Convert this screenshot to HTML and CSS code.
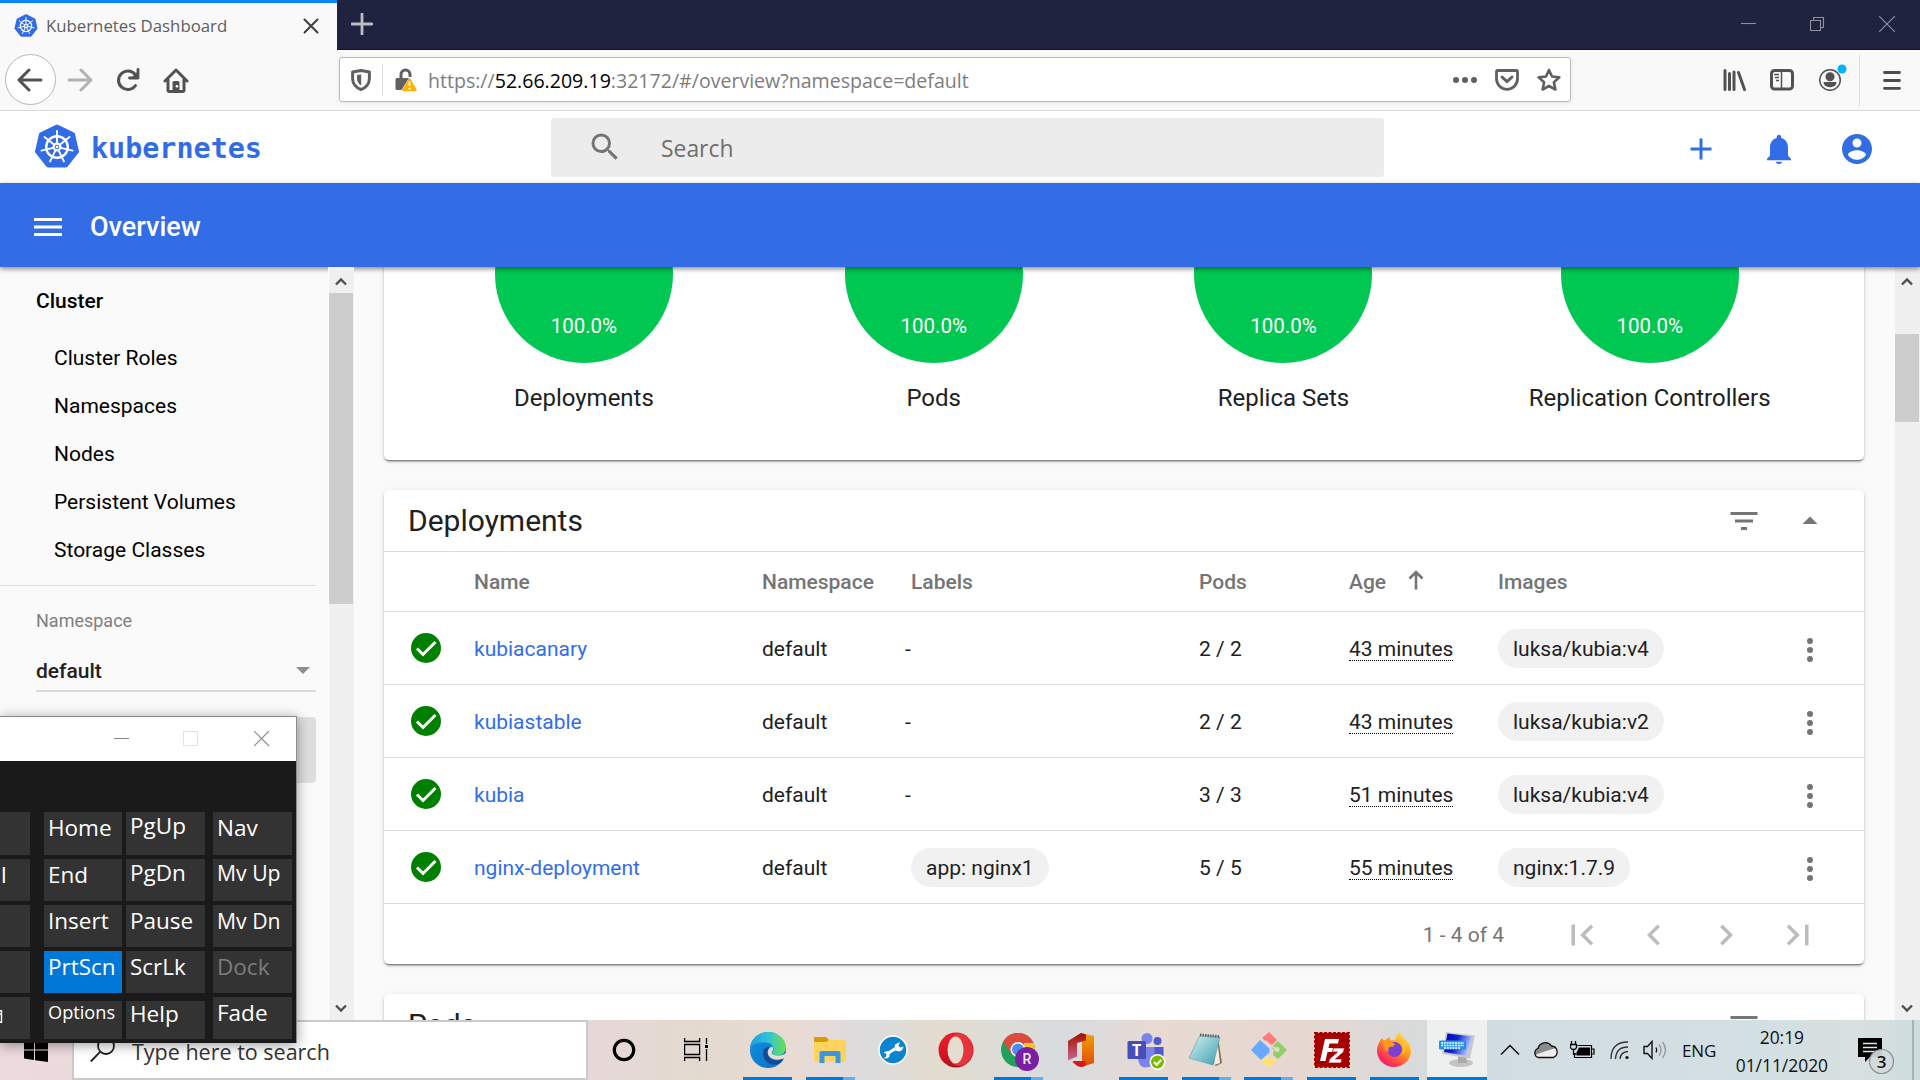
FILE: index.html
```html
<!DOCTYPE html>
<html lang="en">
<head>
<meta charset="utf-8">
<title>Kubernetes Dashboard</title>
<link rel="stylesheet" href="styles.css">
</head>
<body>
<svg class="defs" aria-hidden="true">
  <symbol id="k8s" viewBox="-23 -23 46 46">
    <path d="M0-20.5 16-12.8 20 4.5 8.9 18.6H-8.9L-20 4.5-16-12.8Z" fill="#326ce5" stroke="#326ce5" stroke-width="4" stroke-linejoin="round"/>
    <g fill="none" stroke="#fff">
      <circle r="10.8" stroke-width="2.4"/>
      <path stroke-width="1.9" stroke-linecap="round" d="M0-4V-16M3.1-2.5 12.5-10M3.9.9 15.6 3.6M1.7 3.6 6.9 14.4M-1.7 3.6-6.9 14.4M-3.9.9-15.6 3.6M-3.1-2.5-12.5-10"/>
      <circle r="3.4" stroke-width="2.2"/>
    </g>
    <circle r="1.3" fill="#fff"/>
  </symbol>
  <symbol id="check" viewBox="0 0 30 30"><circle cx="15" cy="15" r="15" fill="#008000"/><path d="M6 15.5l6 6L24.5 9" fill="none" stroke="#fff" stroke-width="3"/></symbol>
  <symbol id="more" viewBox="0 0 24 24"><circle cx="12" cy="6" r="2"/><circle cx="12" cy="12" r="2"/><circle cx="12" cy="18" r="2"/></symbol>
  <symbol id="filter" viewBox="0 0 24 24"><path d="M10 18h4v-2h-4v2zM3 6v2h18V6H3zm3 7h12v-2H6v2z"/></symbol>
  <symbol id="up" viewBox="0 0 24 24"><path d="M7 14l5-5 5 5z"/></symbol>
  <symbol id="sb-up" viewBox="0 0 12 9"><path d="M1 7.5 6 2.5l5 5" fill="none" stroke="#505050" stroke-width="2.4"/></symbol>
  <symbol id="sb-down" viewBox="0 0 12 9"><path d="M1 1.5l5 5 5-5" fill="none" stroke="#505050" stroke-width="2.4"/></symbol>
</svg>

<div class="screen">
  <header class="tabstrip">
    <div class="tab">
      <svg class="favicon"><use href="#k8s"/></svg>
      <span class="tab-title">Kubernetes Dashboard</span>
      <svg class="tab-close" viewBox="0 0 16 16"><path d="M1.5 1.5l13 13M14.500 1.500l-13 13" stroke="#3d3d3d" stroke-width="2" stroke-linecap="round"/></svg>
    </div>
    <svg class="newtab" viewBox="0 0 22 22"><path d="M11 1v20M1 11h20" stroke="#bcbcc5" stroke-width="2.800" stroke-linecap="round"/></svg>
    <div class="winctl">
      <svg width="16" height="16" viewBox="0 0 16 16"><path d="M0 7.500h15"/></svg>
      <svg width="16" height="16" viewBox="0 0 16 16"><path d="M.5 4.500h10v10H.5zM3.500 4.500v-3h10v10h-3"/></svg>
      <svg width="16" height="16" viewBox="0 0 16 16"><path d="M0 0l16 16M16 0 0 16"/></svg>
    </div>
  </header>

  <nav class="toolbar">
    <span class="back"><svg width="26" height="24" viewBox="0 0 26 24"><path d="M24 12H2M12 2 2 12l10 10"/></svg></span>
    <svg class="tool fwd" width="26" height="24" viewBox="0 0 26 24"><path d="M2 12h22M14 2l10 10-10 10"/></svg>
    <svg class="tool reload" width="24" height="24" viewBox="0 0 24 24"><path d="M19.500 17.500A9.300 9.300 0 1 1 19.500 7"/><path d="M22 1.500V10h-8.500" stroke-width="2.800"/><path d="M22 4 22 10H16z" fill="#525252" stroke-width="1"/></svg>
    <svg class="tool home" width="26" height="25" viewBox="0 0 26 25"><path d="M2 13 13 2l11 11M5 11.500V22q0 1.500 1.500 1.500h13Q21 23.500 21 22V11.500" /><path d="M9.500 23v-8.500q0-1.500 1.500-1.500h4q1.500 0 1.500 1.500V23z" fill="#525252" stroke="none"/><circle cx="14" cy="18.300" r="1.300" fill="#fff" stroke="none"/></svg>
    <div class="urlbar">
      <svg class="shield" width="20" height="22" viewBox="0 0 20 22"><path d="M10 1.600 18.400 3v6.500c0 5-3.600 9.300-8.400 11-4.800-1.700-8.400-6-8.400-11V3z" fill="none" stroke="#606060" stroke-width="3" stroke-linejoin="round"/><path d="M10.200 5.500v11C7.400 15 6 12.200 6 9.500V6z" fill="#606060"/></svg>
      <span class="url-sep"></span>
      <svg class="lock" width="22" height="24" viewBox="0 0 22 24"><path d="M6 10V6.500a4.500 4.500 0 0 1 9 0V9" fill="none" stroke="#606060" stroke-width="3"/><path d="M2 10h12l-7.500 12H2Q.5 22 .5 20.500v-9Q.5 10 2 10z" fill="#606060"/><path d="M14.500 11.500 20.500 22h-12z" fill="#ffb000" stroke="#ffb000" stroke-width="2.500" stroke-linejoin="round"/><path d="M14.500 13.500v4.300M14.500 19.700v1.800" stroke="#fff" stroke-width="2"/></svg>
      <span class="url">https://<b>52.66.209.19</b>:32172/#/overview?namespace=default</span>
      <svg class="dots" width="24" height="6" viewBox="0 0 24 6" fill="#606060"><circle cx="3" cy="3" r="3"/><circle cx="12" cy="3" r="3"/><circle cx="21" cy="3" r="3"/></svg>
      <svg class="pocket" width="24" height="22" viewBox="0 0 24 22" fill="none" stroke="#606060" stroke-width="2.800" stroke-linejoin="round" stroke-linecap="round"><path d="M2.800 1.500h18.400q1.300 0 1.300 1.300v7A10.500 10.500 0 0 1 1.500 9.800v-7q0-1.300 1.300-1.300z"/><path d="M7 8l5 4.700L17 8" stroke-width="3"/></svg>
      <svg class="star" width="24" height="24" viewBox="0 0 24 24" fill="none" stroke="#606060" stroke-width="2.600" stroke-linejoin="round"><path d="M12 2l3 6.500 7.300.9-5.400 4.800 1.500 7.300L12 18l-6.400 3.500 1.500-7.300L1.700 9.400 9 8.500z"/></svg>
    </div>
    <div class="tools-right">
      <svg width="24" height="22" viewBox="0 0 24 22" fill="none" stroke="#525252" stroke-width="3" stroke-linecap="round"><path d="M2 1.500v19M6.500 4.500v16M11 3v17.500M15.500 3.500l6 17"/></svg>
      <svg width="24" height="22" viewBox="0 0 24 22" fill="none" stroke="#525252"><rect x="1.500" y="1.500" width="21" height="18.500" rx="3" stroke-width="3"/><path d="M11.500 2v18" stroke-width="1.500"/><path d="M4 5.500h5M5 8.500h4M6 11.500h3" stroke-width="1.500"/></svg>
      <svg class="account" width="29" height="28" viewBox="0 0 29 28"><circle cx="11" cy="17" r="10.300" fill="none" stroke="#525252" stroke-width="1.500"/><circle cx="11" cy="13.800" r="4.500" fill="#525252"/><path d="M4.500 19h13q0 5-6.500 5.300Q4.500 24 4.500 19z" fill="#525252"/><circle cx="23" cy="6" r="4.500" fill="#00b3ff"/></svg>
      <span class="tool-sep"></span>
      <svg width="18" height="19" viewBox="0 0 18 19"><path d="M1.500 1.500h15M1.500 9.500h15M1.500 17.300h15" stroke="#4c4c4c" stroke-width="2.800" stroke-linecap="round"/></svg>
    </div>
  </nav>

  <header class="appbar">
    <svg class="logo"><use href="#k8s"/></svg>
    <span class="wordmark">kubernetes</span>
    <div class="search">
      <svg width="36" height="36" viewBox="0 0 24 24" fill="#757575"><path d="M15.500 14h-.79l-.28-.27A6.471 6.471 0 0 0 16 9.500 6.500 6.500 0 1 0 9.500 16c1.610 0 3.090-.59 4.230-1.570l.27.28v.79l5 4.990L20.490 19l-4.990-5zm-6 0C7.010 14 5 11.990 5 9.500S7.010 5 9.500 5 14 7.010 14 9.500 11.990 14 9.500 14z"/></svg>
      <span>Search</span>
    </div>
    <div class="app-actions">
      <svg viewBox="0 0 24 24"><path d="M19 13h-6v6h-2v-6H5v-2h6V5h2v6h6v2z"/></svg>
      <svg viewBox="0 0 24 24"><path d="M12 22c1.100 0 2-.6 2-1.500h-4c0 .9.900 1.500 2 1.500zm6-5.500V11c0-3.070-1.640-5.640-4.500-6.320V4c0-.83-.67-1.500-1.500-1.500s-1.500.67-1.500 1.500v.68C7.630 5.360 6 7.920 6 11v5.500l-2 2v1h16v-1l-2-2z"/></svg>
      <svg viewBox="0 0 24 24"><path d="M12 2C6.480 2 2 6.480 2 12s4.480 10 10 10 10-4.480 10-10S17.520 2 12 2zm0 3c1.660 0 3 1.340 3 3s-1.340 3-3 3-3-1.340-3-3 1.340-3 3-3zm0 14.200c-2.500 0-4.710-1.280-6-3.220.03-1.990 4-3.080 6-3.080 1.990 0 5.970 1.090 6 3.080-1.290 1.940-3.500 3.220-6 3.220z"/></svg>
    </div>
  </header>

  <div class="titlebar">
    <svg width="36" height="36" viewBox="0 0 24 24" fill="#fff"><path d="M2.700 18h18.600v-2H2.700v2zm0-5h18.600v-2H2.700v2zm0-7v2h18.600V6H2.700z"/></svg>
    <h1>Overview</h1>
  </div>

  <div class="content">
    <aside class="sidebar">
      <h2>Cluster</h2>
      <ul>
        <li>Cluster Roles</li>
        <li>Namespaces</li>
        <li>Nodes</li>
        <li>Persistent Volumes</li>
        <li>Storage Classes</li>
      </ul>
      <div class="ns-label">Namespace</div>
      <div class="ns-select">default<i></i></div>
      <div class="nav-active"></div>
    </aside>
    <div class="scrollbar side"><svg><use href="#sb-up"/></svg><span class="thumb"></span><svg class="end"><use href="#sb-down"/></svg></div>

    <main>
      <section class="card graphs">
        <figure><div class="pie">100.0%</div><figcaption>Deployments</figcaption></figure>
        <figure><div class="pie">100.0%</div><figcaption>Pods</figcaption></figure>
        <figure><div class="pie">100.0%</div><figcaption>Replica Sets</figcaption></figure>
        <figure><div class="pie">100.0%</div><figcaption>Replication Controllers</figcaption></figure>
      </section>

      <section class="card">
        <div class="card-head"><h3>Deployments</h3><svg><use href="#filter"/></svg><svg><use href="#up"/></svg></div>
        <div class="row head">
          <span></span><span>Name</span><span>Namespace</span><span>Labels</span><span>Pods</span>
          <span class="age-h">Age<svg width="16" height="20" viewBox="0 0 16 20"><path d="M8 19.500V2M1.500 8.500 8 2l6.500 6.500" fill="none" stroke="#757575" stroke-width="2.600"/></svg></span>
          <span>Images</span><span></span>
        </div>
        <div class="row">
          <svg class="ok"><use href="#check"/></svg><a>kubiacanary</a><span>default</span><span class="none">-</span><span>2 / 2</span><span><u>43 minutes</u></span><span class="chips"><em class="chip">luksa/kubia:v4</em></span><svg class="menu"><use href="#more"/></svg>
        </div>
        <div class="row">
          <svg class="ok"><use href="#check"/></svg><a>kubiastable</a><span>default</span><span class="none">-</span><span>2 / 2</span><span><u>43 minutes</u></span><span class="chips"><em class="chip">luksa/kubia:v2</em></span><svg class="menu"><use href="#more"/></svg>
        </div>
        <div class="row">
          <svg class="ok"><use href="#check"/></svg><a>kubia</a><span>default</span><span class="none">-</span><span>3 / 3</span><span><u>51 minutes</u></span><span class="chips"><em class="chip">luksa/kubia:v4</em></span><svg class="menu"><use href="#more"/></svg>
        </div>
        <div class="row">
          <svg class="ok"><use href="#check"/></svg><a>nginx-deployment</a><span>default</span><span class="chips"><em class="chip">app: nginx1</em></span><span>5 / 5</span><span><u>55 minutes</u></span><span class="chips"><em class="chip">nginx:1.7.9</em></span><svg class="menu"><use href="#more"/></svg>
        </div>
        <div class="pager">
          <span>1 - 4 of 4</span>
          <svg viewBox="0 0 24 24"><path d="M18.410 16.590L13.820 12l4.590-4.590L17 6l-6 6 6 6zM6 6h2v12H6z"/></svg>
          <svg viewBox="0 0 24 24"><path d="M15.410 7.410L14 6l-6 6 6 6 1.410-1.410L10.830 12z"/></svg>
          <svg viewBox="0 0 24 24"><path d="M10 6L8.590 7.410 13.170 12l-4.580 4.590L10 18l6-6z"/></svg>
          <svg viewBox="0 0 24 24"><path d="M5.590 7.410L10.180 12l-4.590 4.590L7 18l6-6-6-6zM16 6h2v12h-2z"/></svg>
        </div>
      </section>

      <section class="card">
        <div class="card-head"><h3>Pods</h3><svg><use href="#filter"/></svg><svg><use href="#up"/></svg></div>
      </section>
    </main>
    <div class="scrollbar page"><svg><use href="#sb-up"/></svg><span class="thumb"></span><svg class="end"><use href="#sb-down"/></svg></div>
  </div>

  <footer class="taskbar">
    <div class="start"><svg width="24" height="24" viewBox="0 0 24 24"><path d="M0 3.500 10 2v9.500H0zM11 1.800 24 0v11.500H11zM0 12.500h10V22L0 20.500zM11 12.500h13V24l-13-1.800z"/></svg></div>
    <div class="tb-search">
      <svg width="25" height="27" viewBox="0 0 25 27" fill="none" stroke="#222" stroke-width="1.800"><circle cx="16" cy="9" r="8"/><path d="M10.300 14.700.8 24.500"/></svg>
      <span>Type here to search</span>
    </div>
    <div class="sys"><svg width="24" height="24" viewBox="0 0 24 24"><circle cx="12" cy="12" r="9.700" fill="none" stroke="#000" stroke-width="3.200"/></svg></div>
    <div class="sys"><svg width="24" height="24" viewBox="0 0 24 24" fill="none" stroke="#000" stroke-width="1.300"><path d="M.6 0v3.500h15V0M.6 6.500h15v10h-15zM.6 23v-3.500h15V23M22.500 0v6M22.500 11v12"/><path d="M21 7h3v3h-3z" fill="#000" stroke="none"/></svg></div>

    <div class="app run"><svg viewBox="0 0 36 36">
      <defs><linearGradient id="e1" x1="0" x2="1"><stop stop-color="#1b9de2"/><stop offset=".5" stop-color="#2fc2d8"/><stop offset="1" stop-color="#6be04a"/></linearGradient><linearGradient id="e2" x2="1" y2="1"><stop stop-color="#1290dd"/><stop offset="1" stop-color="#0a6fcb"/></linearGradient></defs>
      <circle cx="18" cy="18" r="18" fill="url(#e2)"/>
      <path d="M0 16C1 6 9 0 18 0c11 0 18 8 18 15 0 6-4.500 8.500-9 8.500-5 0-6-2-4-4.500 1.500-3-.5-8.500-8-8.500C8 10.500 2 12 0 16z" fill="url(#e1)"/>
      <path d="M14 17.500c-3 8 3 16 12 15 4-.5 6-3 7.500-5.500-7 3-14 1-15.500-4-1-4 0-6 1.500-8-2 0-4 .5-5.500 2.500z" fill="#134a96"/>
      <path d="M22 14.500c-4 1.500-5.500 6-3 9.500 3 4 9 4.500 14.500 2.500 1.500-.5 2.500 0 2.500.5v-6c-2.500 2-6 2.700-9.500 2.500-5-.3-5.500-2.500-4-4.500 1-2 .5-3.500-.5-4.500z" fill="#e6dcd4"/>
    </svg></div>
    <div class="app run multi"><svg viewBox="0 0 36 36"><path d="M2 6q0-1 1-1h11l3 3-3 3H2z" fill="#dd9a00"/><path d="M2 10h12l3-2h15q2 0 2 2v18q0 2-2 2H4q-2 0-2-2z" fill="#ffd45e"/><path d="M7.500 31V21q0-2 2-2h17q2 0 2 2v10h-5v-7h-11v7z" fill="#3a96dd"/></svg></div>
    <div class="app"><svg viewBox="0 0 36 36"><circle cx="18" cy="18" r="14" fill="#0a84cf" stroke="#fff" stroke-width="1.500"/><path d="M12.500 21.500 23 15" fill="none" stroke="#fff" stroke-width="3.200"/><path d="M8.500 20.500l3 1.500-.5 3-2.500 1q4 1.500 6-1.500v-4l-2.500-1.500zM20 12.500l5-2.500-1.500 3.500 1.500 2 3.500-1q-.5 4-4 5l-5-1z" fill="#fff"/></svg></div>
    <div class="app"><svg viewBox="0 0 36 36"><defs><linearGradient id="o1" x2=".4" y2="1"><stop stop-color="#ff1b2d"/><stop offset="1" stop-color="#b30f1c"/></linearGradient></defs><ellipse cx="18" cy="18" rx="17.500" ry="17.500" fill="url(#o1)"/><path d="M14 4.500Q22-2 30 6a17.500 17.500 0 0 1 0 24q-8 7-16 1.500z" fill="#e5343c"/><ellipse cx="17.500" cy="18" rx="8" ry="13.500" fill="#e3dccf"/></svg></div>
    <div class="app run multi"><svg class="wide" viewBox="0 0 42 40"><circle cx="18" cy="19" r="17" fill="#1fa05c"/><path d="M3.300 10.500A17 17 0 0 1 33.500 12l-15 0-8 10z" fill="#dc4c3c"/><path d="M33.500 12A17 17 0 0 1 18 36l7-14-1-10z" fill="#fdc31c"/><circle cx="18" cy="18.500" r="7.500" fill="#fff"/><circle cx="18" cy="18.500" r="6" fill="#4c8bf5"/><circle cx="27" cy="28" r="12" fill="#7b1fa2"/><text x="27" y="33" text-anchor="middle" class="badge">R</text></svg></div>
    <div class="app"><svg viewBox="0 0 36 36"><defs><linearGradient id="f1" x2="0" y2="1"><stop stop-color="#f6a000"/><stop offset="1" stop-color="#e04a00"/></linearGradient><linearGradient id="f2" x2="0" y2="1"><stop stop-color="#a31100"/><stop offset="1" stop-color="#c9668f"/></linearGradient></defs><path d="M18 1l13 3v27l-13 4-9-4.500 10-1V8z" fill="url(#f1)"/><path d="M18 1 23 2.500V8.500l-9 2.500v13.500L5 28.500V9z" fill="url(#f2)"/><path d="M9.500 29h13v5L18 35l-4-1z" fill="#d01a20"/></svg></div>
    <div class="app run"><svg class="wide" viewBox="0 0 42 40"><circle cx="22" cy="7.500" r="5.500" fill="#7b83eb"/><circle cx="32.500" cy="10" r="4" fill="#5059c9"/><path d="M24 16h14.500v11q0 5-6 6z" fill="#5059c9"/><path d="M13 16h16.500v13q-1 7.500-9 7.500-6 0-7.500-8z" fill="#7b83eb"/><rect x="2.500" y="10" width="18.500" height="18" rx="1.500" fill="#464eb8"/><text x="11.700" y="24.500" text-anchor="middle" class="teams-t">T</text><circle cx="32.500" cy="31" r="8" fill="#fff"/><circle cx="32.500" cy="31" r="6.500" fill="#7eb900"/><path d="M29 31l2.700 2.700 4.600-5" fill="none" stroke="#fff" stroke-width="2"/></svg></div>
    <div class="app run multi"><svg viewBox="0 0 36 36"><defs><linearGradient id="n1" x2="1" y2="1"><stop stop-color="#d8f2f4"/><stop offset="1" stop-color="#3c9fb0"/></linearGradient></defs><path d="M30 5l4 26-6 3-4-3z" fill="#8a7448"/><path d="M29 6l3 25-6 2z" fill="#f0eee6"/><path d="M12 3l20 2-7 28L1 26z" fill="url(#n1)" stroke="#5d9aa8" stroke-width=".6"/><path d="M12 3l19 1.500" stroke="#666" stroke-width="3" stroke-dasharray="1.500 1"/></svg></div>
    <div class="app run multi"><svg viewBox="0 0 36 36"><path d="M18 0l8 8-6 6-9-8z" fill="#ff7b7b"/><path d="M9 8l10 9v3l-9 8L0 18z" fill="#68a9ff"/><path d="M27 9l9 9-9 9-5-4 1-5-3-3z" fill="#8bd165"/><path d="M19 22l7 6-8 8-8-8z" fill="#ffe178"/><circle cx="19.500" cy="24" r="3" fill="#e6d8d0"/><circle cx="26" cy="17.500" r="2.500" fill="#e6d8d0"/><path d="M19.500 24V14l-5-5M20 13l6 5" stroke="#e6d8d0" stroke-width="2" fill="none"/></svg></div>
    <div class="app run"><svg viewBox="0 0 36 36"><rect x="1" y="1" width="34" height="34" fill="#a80000" stroke="#a80000" stroke-width="2" stroke-dasharray="3 1.500"/><path d="M6 29 11 7h14l-1 4.500h-8.500l-1 4.500h7l-1 4h-7l-2 9z" fill="#fff"/><path d="M19.500 16h11l-1 4-8 7h6.500l-1 4H14.500l1-4 8-7h-5z" fill="#fff" stroke="#a80000" stroke-width=".7"/></svg></div>
    <div class="app run"><svg viewBox="0 0 36 36"><defs><linearGradient id="x1" x1=".9" y1="0" x2=".2" y2="1"><stop stop-color="#fff04a"/><stop offset=".45" stop-color="#ff9620"/><stop offset=".8" stop-color="#ff3650"/><stop offset="1" stop-color="#e31587"/></linearGradient></defs><path d="M23 0q2 4 7 8 5 5 5 11a17 16 0 0 1-34 0Q1 12 6 6q1 2 3 2.500Q12 5 14 5q-.5 2 1 3.500 3-1 5-1 0-5 3-7.500z" fill="url(#x1)"/><circle cx="18.500" cy="17.500" r="7.500" fill="#7c3fd0"/><path d="M6 9q5-1 9 1l4 2q-1 3-5 3-3 1-1 5-5-2-6-6z" fill="#ff9a1c"/><path d="M21 9q6 2 6 8 0 4-3 6 5-1 6-6Q30 10 21 9z" fill="#ffbd2f"/></svg></div>
    <div class="app run focus"><svg viewBox="0 0 36 36"><defs><linearGradient id="m1" x2="1" y2=".3"><stop stop-color="#0008b8"/><stop offset=".5" stop-color="#1022d0"/><stop offset="1" stop-color="#b8c8ff"/></linearGradient></defs><ellipse cx="22" cy="31" rx="12" ry="4" fill="#c4c4c4"/><path d="M19 24h8l1 7h-9z" fill="#aaa"/><path d="M7 0l29 3.500-5 23L3 22z" fill="#c9c9c9"/><path d="M8.500 1.500 33 4.500l-4.500 19.500L5 20z" fill="url(#m1)"/><rect x="0" y="8.500" width="27" height="9" rx="1" fill="#2490df"/><path d="M2 11h23M2 13.500h23M5 16h17" stroke="#fff" stroke-width="1.500" stroke-dasharray="2 .8"/></svg></div>

    <div class="tray">
      <svg class="t-chev" width="20" height="12" viewBox="0 0 20 12"><path d="M1 10.500 10 1.500l9 9" fill="none" stroke="#111" stroke-width="1.500"/></svg>
      <svg class="t-cloud" width="26" height="18" viewBox="0 0 26 18"><path d="M5.500 16.500A4.700 4.700 0 0 1 5 7.500 7.500 7.500 0 0 1 18.500 5a6 6 0 0 1 2 11.500z" fill="#eee"/><path d="M2 14Q1 9 5 7.500A7.500 7.500 0 0 1 18.500 5q3 .2 4.500 2l-10 3z" fill="#8b8b8b"/><path d="M5.500 16.500A4.700 4.700 0 0 1 5 7.500 7.500 7.500 0 0 1 18.500 5a6 6 0 0 1 2 11.500z" fill="none" stroke="#111" stroke-width="1.300"/></svg>
      <svg class="t-bat" width="25" height="18" viewBox="0 0 25 18"><path d="M7.500 4.500h14v12h-17v-4M22 8h2v5h-2" fill="none" stroke="#000" stroke-width="1.200"/><path d="M9 6.500h11v8H6.500v-3z"/><path d="M1.500 0v3M5.500 0v3M.5 3.500h6v3q-.5 2-3 2t-3-2zM3.500 8v5h3" fill="none" stroke="#000" stroke-width="1.300"/></svg>
      <svg class="t-wifi" width="20" height="20" viewBox="0 0 20 20" fill="none" stroke="#333" stroke-width="1.300"><path d="M1 19Q1 2 18 2M5.500 19Q6 7 18 7M10 19q.5-7 8-7.500"/><circle cx="17" cy="17.500" r="1.600" fill="#000" stroke="none"/></svg>
      <svg class="t-vol" width="24" height="20" viewBox="0 0 24 20" fill="none" stroke="#111" stroke-width="1.400"><path d="M1 6.500h3.500L9 1.500v17l-4.500-5H1z"/><path d="M13 7.500q1.500 2.500 0 5"/><path d="M16 4.500q4 5.500 0 11M19.500 2q6 8 0 16" stroke="#999"/></svg>
      <span class="lang">ENG</span>
      <div class="clock"><span>20:19</span><span>01/11/2020</span></div>
      <svg class="t-note" width="38" height="38" viewBox="0 0 38 38"><path d="M1 1h24v19H13l-5 5v-5H1z"/><path d="M6 6.500h14M6 10.500h14M6 14.500h14" stroke="#dde6e8" stroke-width="1.500"/><circle cx="24.500" cy="24.500" r="12" fill="#d4d9dc" fill-opacity=".93" stroke="#8a8f92" stroke-width="1.200"/><text x="24.500" y="31" text-anchor="middle" class="note-n">3</text></svg>
      <span class="peek"></span>
    </div>
  </footer>

  <div class="osk">
    <div class="osk-title">
      <svg width="16" height="16" viewBox="0 0 16 16"><path d="M0 7.500h15"/></svg>
      <svg class="dim" width="16" height="16" viewBox="0 0 16 16"><path d="M.5.5h14v14H.5z"/></svg>
      <svg width="16" height="16" viewBox="0 0 16 16"><path d="M0 0l15 15M15 0 0 15"/></svg>
    </div>
    <div class="keys">
      <div class="col c1"><kbd></kbd><kbd class="d3 cut">l</kbd><kbd></kbd><kbd></kbd><kbd class="tall"><svg width="4" height="13" viewBox="0 0 4 13"><path d="M0 .8h1.500v11.500H0M0 4h1" fill="none" stroke="#fff" stroke-width="1.400"/></svg></kbd></div>
      <div class="col c2"><kbd class="d3">Home</kbd><kbd class="d3">End</kbd><kbd class="d3">Insert</kbd><kbd class="d3 hot">PrtScn</kbd><kbd class="short small">Options</kbd></div>
      <div class="col c3"><kbd class="d1">PgUp</kbd><kbd class="d1">PgDn</kbd><kbd class="d3">Pause</kbd><kbd class="d3">ScrLk</kbd><kbd class="short">Help</kbd></div>
      <div class="col c4"><kbd class="d3">Nav</kbd><kbd class="d1 mid">Mv Up</kbd><kbd class="d3 mid">Mv Dn</kbd><kbd class="d3 off">Dock</kbd><kbd class="tall d3">Fade</kbd></div>
    </div>
  </div>
</div>
</body>
</html>
```
FILE: styles.css
```css
* { box-sizing: border-box; }
body { margin: 0; overflow: hidden; font-family: Roboto, sans-serif; font-size: 21px; color: #212121; }
svg { display: block; flex: none; }
.defs { position: absolute; width: 0; height: 0; }
.screen { position: relative; width: 1920px; height: 1080px; display: flex; flex-direction: column; overflow: hidden; background: #fafafa; }
h1, h2, h3, ul, figure { margin: 0; padding: 0; }

/* browser chrome */
.tabstrip { flex: none; height: 50px; display: flex; align-items: center; background: #20233f; border-bottom: 1px solid #11122a; }
.tab { width: 337px; height: 50px; display: flex; align-items: center; padding: 0 18px 0 14px; background: #f9f9fa; border-top: 3px solid #0a84ff; margin-bottom: -1px; }
.favicon { width: 24px; height: 24px; margin-top: -1px; }
.tab-title { flex: 1; margin-left: 8px; margin-top: -2px; font: 16.8px/24px "Open Sans", sans-serif; color: #5e5e5e; }
.tab-close { width: 16px; height: 16px; margin-top: -2px; }
.newtab { width: 22px; height: 22px; margin-left: 14px; margin-top: -1px; }
.winctl { margin-left: auto; display: flex; gap: 53px; padding-right: 25px; margin-top: -1px; }
.winctl svg { fill: none; stroke: #8f909f; stroke-width: 1.1; }

.toolbar { flex: none; height: 61px; display: flex; align-items: center; background: #f9f9fa; border-bottom: 1px solid #dcdcdc; }
.back { width: 51px; height: 51px; margin-left: 5px; margin-top: -1px; border: 1px solid #b8b8b8; border-radius: 50%; background: #fff; display: flex; align-items: center; justify-content: center; }
.back svg, .tool { fill: none; stroke: #525252; stroke-width: 3; stroke-linecap: round; stroke-linejoin: round; }
.back svg { margin-left: -1px; }
.tool.fwd { stroke: #b2b2b2; margin-left: 11px; }
.reload { margin-left: 23px; }
.home { margin-left: 23px; }
.urlbar { width: 1232px; height: 45px; margin-left: 150px; margin-top: -1px; display: flex; align-items: center; background: #fff; border: 1px solid #b9b9bb; border-radius: 3px; box-shadow: 0 1px 5px rgba(0,0,0,.08); }
.shield { margin-left: 11px; }
.url-sep { width: 1px; height: 32px; margin: 0 12px 0 11px; background: #dcdcdc; }
.url { flex: 1; margin-left: 11px; margin-top: 2px; font: 19.57px/28px "Open Sans", sans-serif; color: #7d7d7d; white-space: nowrap; }
.url b { font-weight: 400; color: #000; }
.pocket { margin-left: 18px; }
.star { margin: 0 9px 0 18px; }
.tools-right { flex: 1; display: flex; align-items: center; margin-left: 152px; }
.tools-right svg:nth-child(2) { margin-left: 23px; }
.account { margin-left: 25px; margin-top: -7px; }
.tool-sep { width: 1px; height: 51px; margin: 0 23px 0 11px; background: #dcdcdc; }

/* dashboard header */
.appbar { flex: none; height: 72px; display: flex; align-items: center; background: #fff; }
.logo { width: 46px; height: 46px; margin-left: 34px; }
.wordmark { width: 460px; margin-left: 11px; margin-top: 3px; font: bold 28.4px/36px "DejaVu Sans Mono", monospace; color: #326ce5; }
.search { width: 833px; height: 59px; margin-top: 1px; display: flex; align-items: center; padding-left: 36px; background: #ececec; border-radius: 3px; }
.search svg { margin-top: -2px; }
.search span { margin-left: 38px; margin-top: 2px; font: 22.9px/30px "Open Sans", sans-serif; color: #6f6f6f; }
.app-actions { margin-left: auto; display: flex; gap: 42px; padding: 4px 45px 0 0; }
.app-actions svg { width: 36px; height: 36px; fill: #326de6; }
.titlebar { flex: none; position: relative; z-index: 1; height: 84px; display: flex; align-items: center; padding: 4px 0 0 30px; background: #326de6; box-shadow: 0 2px 5px rgba(0,0,0,.45); }
.titlebar h1 { margin-left: 24px; margin-top: -1px; font-size: 27px; font-weight: 500; color: #fff; }

/* body */
.content { flex: none; height: 753px; display: flex; overflow: clip; }
.sidebar { width: 328px; padding: 14px 12px 0 0; color: #000; }
.sidebar h2 { padding-left: 36px; font-size: 21px; font-weight: 500; line-height: 40px; }
.sidebar ul { list-style: none; margin-top: 13px; padding-bottom: 11px; border-bottom: 1px solid #dcdcdc; }
.sidebar li { padding-left: 54px; line-height: 48px; }
.ns-label { margin-top: 23px; padding-left: 36px; font-size: 18px; line-height: 24px; color: #7f7f7f; }
.ns-select { margin: 18px 0 0 36px; height: 41px; display: flex; justify-content: space-between; line-height: 40px; font-weight: 500; color: #212121; border-bottom: 2px solid #dadada; }
.ns-select i { margin: 16px 6px 0 0; width: 14px; height: 7px; background: #8f8f8f; clip-path: polygon(0 0, 100% 0, 50% 100%); }
.nav-active { height: 66px; margin: 25px 0 0 12px; background: #dedede; border-radius: 4px; }
.scrollbar { flex: none; width: 25px; display: flex; flex-direction: column; align-items: center; background: #f0f0f0; }
.scrollbar svg { width: 12px; height: 9px; margin: 10px 1px 0 0; }
.scrollbar .end { margin: auto 1px 7px 0; }
.scrollbar .thumb { width: 24px; margin: 7px 1px 0 0; background: #cdcdcd; }
.side { width: 26px; position: relative; z-index: 2; border-left: 1px solid #fff; }
.side .thumb { height: 311px; }
.page .thumb { height: 88px; margin-top: 48px; }

main { width: 1541px; padding: 0 31px 0 30px; overflow: hidden; }
.card { background: #fff; border-radius: 5px; box-shadow: 0 3px 1px -2px rgba(0,0,0,.3), 0 2px 2px rgba(0,0,0,.22), 0 1px 5px rgba(0,0,0,.13); margin-bottom: 30px; }
.graphs { height: 293px; margin-top: -100px; padding: 18px 23px 0 25px; display: flex; justify-content: space-around; }
.graphs figure { min-width: 209px; display: flex; flex-direction: column; align-items: center; }
.pie { width: 178px; height: 178px; display: flex; justify-content: center; padding-top: 128px; border-radius: 50%; background: #00c752; color: #fff; font-size: 20.5px; line-height: 26px; }
.graphs figcaption { margin-top: 20px; font-size: 24px; line-height: 30px; white-space: nowrap; }
.card-head { height: 62px; display: flex; align-items: center; padding: 0 36px 0 24px; border-bottom: 1px solid #dedede; }
.card-head h3 { flex: 1; font-size: 30px; font-weight: 400; }
.card-head svg { width: 36px; height: 36px; margin-left: 30px; fill: #757575; }
.row { height: 73px; display: grid; grid-template-columns: 90px 288px 149px 288px 150px 149px 258px 108px; align-items: center; border-bottom: 1px solid #dedede; }
.row a { color: #326de6; }
.row a, .row span { padding-top: 2px; }
.row .chips { padding-top: 0; }
.row.head { height: 60px; font-weight: 500; color: #757575; }
.row.head span { padding-top: 0; }
.age-h { display: flex; align-items: center; gap: 22px; }
.age-h svg { margin-top: -3px; }
.ok { width: 30px; height: 30px; margin-left: 27px; }
.none { margin-left: -6px; }
.row u { text-decoration: none; border-bottom: 1px dotted #000; display: inline-block; line-height: 22px; }
.chip { display: inline-block; height: 39px; padding: 0 15px; border-radius: 20px; background: #f1f1f1; font-style: normal; line-height: 40px; }
.menu { width: 36px; height: 36px; fill: #757575; justify-self: center; margin-top: 3px; }
.pager { height: 60px; display: flex; align-items: center; justify-content: flex-end; padding-right: 15px; color: #757575; }
.pager span { margin-right: 57px; margin-top: 1px; }
.pager svg { width: 42px; height: 42px; margin-right: 30px; margin-top: 2px; fill: #bcbcbc; }

/* taskbar */
.taskbar { flex: none; position: relative; z-index: 2; height: 60px; display: flex; background: linear-gradient(90deg, #ecdadd 0, #e6d8d8 590px, #e3dacf 700px, #e9dad4 790px, #dcdcdd 870px, #e3dccf 940px, #d8dcdf 1060px, #e7dad3 1160px, #e6d8d0 1300px, #dadada 1400px, #d2dde1 1500px, #d2dfe3 1750px, #d8e0df 1860px, #cddde0 1920px); }
.start { width: 72px; padding: 18px 0 0 24px; }
.tb-search { width: 516px; display: flex; align-items: center; padding-left: 16px; background: #fff; border: 2px solid #cacaca; }
.tb-search svg { margin-top: 1px; }
.tb-search span { margin: 3px 0 0 17px; font: 21.5px/28px "Open Sans", sans-serif; color: #333; }
.sys { width: 72px; display: flex; align-items: center; justify-content: center; }
.sys + .sys { margin-right: 4.2px; }
.app { width: 62.68px; display: flex; flex-direction: column; align-items: center; padding-top: 12px; }
.app svg { width: 36px; height: 36px; }
.app .wide { width: 42px; height: 40px; margin: -1px -5px -3px 0; }
.app.run::after { content: ""; width: 49px; height: 3px; margin-top: auto; background: #0078d7; }
.app.multi::after { background: linear-gradient(90deg, #0078d7 37px, #66aee7 37px); }
.app.focus { width: 60px; margin-left: 1.3px; background: #eef0f0; }
.app.focus::after { width: 60px; }
.badge { font: 500 14px Roboto, sans-serif; fill: #eee; }
.teams-t { font: bold 16px "Open Sans", sans-serif; fill: #fff; }
.tray { flex: 1; display: flex; align-items: center; padding-left: 13px; font: 17.4px/28px "Open Sans", sans-serif; color: #111; }
.t-cloud { margin-left: 13px; }
.t-bat { margin-left: 11px; }
.t-wifi { margin-left: 15px; }
.t-vol { margin-left: 13px; }
.lang { margin-left: 15px; width: 34px; font-size: 17px; margin-top: 1px; }
.clock { width: 96px; margin-left: 18px; display: flex; flex-direction: column; align-items: center; margin-top: 1px; }
.t-note { margin: 12px 0 0 27px; }
.note-n { font: 600 17px "Open Sans", sans-serif; fill: #111; }
.peek { width: 2px; height: 60px; margin-left: 17px; background: #a9b3b6; }

/* on-screen keyboard window */
.osk { position: absolute; z-index: 3; left: 0; top: 716px; width: 297px; height: 327px; background: #1a1a1a; border: solid #8d8d8d; border-width: 1px 1px 0 0; box-shadow: 0 2px 12px rgba(0,0,0,.4); }
.osk-title { height: 44px; display: flex; align-items: center; justify-content: flex-end; gap: 54px; padding-right: 26px; background: #fff; }
.osk-title svg { fill: none; stroke: #8a8a8a; stroke-width: 1.1; }
.osk-title .dim { stroke: #e2e2e2; margin: 0 1px 0 -1px; }
.keys { display: flex; height: 278px; padding-top: 51px; }
.col { display: flex; flex-direction: column; gap: 4px; }
.c1 { width: 30px; margin-right: 14px; }
.c2 { width: 78px; margin-right: 4px; }
.c3 { width: 79px; margin-right: 8px; }
.c4 { width: 79px; }
kbd { flex: none; height: 42px; padding: 0 0 0 4px; background: #333; color: #fff; font: 22.5px/26px "Open Sans", sans-serif; white-space: nowrap; }
kbd:first-child { height: 43px; }
.d3 { padding-top: 3px; }
.d1 { padding-top: 1px; }
.mid { font-size: 21.2px; }
.hot { background: #0078d7; }
.off { color: #7d7d7d; }
.short { height: 38px; margin-top: 4px; }
.small { font-size: 18.2px; line-height: 23px; }
.cut { padding-left: 1px; }
.tall svg { margin: 13px 0 0 -4px; }
```
